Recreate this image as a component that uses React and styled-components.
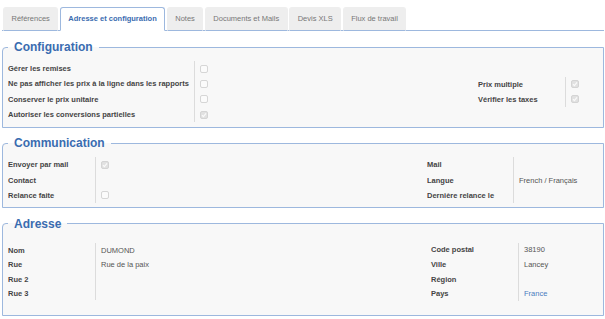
import React from 'react'
import styled, { createGlobalStyle } from 'styled-components'

const GlobalStyle = createGlobalStyle`
    html, body {
        margin: 0;
        padding: 0;
        background: #fff;
    }
    body {
        font-family: "Liberation Sans", Arial, sans-serif;
    }
`

const Page = styled.div`
    width: 602px;
    padding: 7px 1px 0 2px;
`

const TabBar = styled.div`
    display: flex;
    padding-left: 1px;
    border-bottom: 1px solid #9db8de;
`

const Tab = styled.div`
    box-sizing: border-box;
    height: 24px;
    margin: 0 1.5px -1px 0;
    padding: 0 7.5px;
    border: 1px solid ${p => (p.$active ? '#9db8de' : '#eeeeee')};
    border-bottom-color: ${p => (p.$active ? '#ffffff' : '#9db8de')};
    border-radius: 3px 3px 0 0;
    background: ${p => (p.$active ? '#ffffff' : '#eeeeee')};
    color: ${p => (p.$active ? '#3a6cb0' : '#777777')};
    font-size: 7.5px;
    font-weight: ${p => (p.$active ? 'bold' : 'normal')};
    line-height: 21px;
    white-space: nowrap;
`

const Section = styled.fieldset`
    margin: ${p => p.$gap}px 0 0;
    padding: ${p => p.$top}px 0 ${p => p.$bottom}px 5px;
    border: 1px solid #9db8de;
    border-radius: 4px 0 0 0;
    background: #f8f8f8;
    min-width: 0;
`

const Legend = styled.legend`
    margin: 0;
    padding: 0 6px;
    color: #3a6cb0;
    font-size: 12px;
    font-weight: bold;
    line-height: 16px;
`

const Body = styled.div`
    display: flex;
`

const Group = styled.div`
    display: flex;
    flex-direction: column;
    align-self: center;
    ${p => (p.$width ? `width: ${p.$width}px; flex: none;` : 'flex: 1;')}
`

const Row = styled.div`
    display: grid;
    grid-template-columns: ${p => p.$labelW}px 1fr;
    height: ${p => p.$h}px;
`

const Label = styled.div`
    display: flex;
    align-items: center;
    border-right: 1px solid #dcdcdc;
    color: #444;
    font-size: 7.5px;
    font-weight: bold;
    white-space: nowrap;
`

const Value = styled.div`
    display: flex;
    align-items: center;
    padding-left: 5px;
    color: #555;
    font-size: 7.5px;
    white-space: nowrap;
`

const Link = styled.span`
    color: #4a7cc0;
`

const Box = styled.span`
    box-sizing: border-box;
    display: inline-flex;
    align-items: center;
    justify-content: center;
    width: 8px;
    height: 8px;
    border: 1px solid ${p => (p.$checked ? '#d4d4d4' : '#d6d6d6')};
    border-radius: 2px;
    background: ${p => (p.$checked ? '#e1e1e1' : '#fbfbfb')};
`

const Checkbox = ({ checked }) => (
    <Box $checked={checked}>
        {checked && (
            <svg width="6" height="6" viewBox="0 0 6 6">
                <path d="M1 3.2 L2.4 4.6 L5 1.4" fill="none" stroke="#fafafa" strokeWidth="1.2" />
            </svg>
        )}
    </Box>
)

const tabs = ['Références', 'Adresse et configuration', 'Notes', 'Documents et Mails', 'Devis XLS', 'Flux de travail']

const sections = [
    {
        title: 'Configuration', gap: 8, top: 6, bottom: 5,
        left: {
            width: 470, labelW: 187,
            rows: [
                { label: 'Gérer les remises', check: false, h: 15.3 },
                { label: 'Ne pas afficher les prix à la ligne dans les rapports', check: false, h: 15.3 },
                { label: 'Conserver le prix unitaire', check: false, h: 15.3 },
                { label: 'Autoriser les conversions partielles', check: true, h: 15.3 },
            ],
        },
        right: {
            labelW: 88,
            rows: [
                { label: 'Prix multiple', check: true, h: 15 },
                { label: 'Vérifier les taxes', check: true, h: 15 },
            ],
        },
    },
    {
        title: 'Communication', gap: 7, top: 6, bottom: 4,
        left: {
            width: 419, labelW: 88,
            rows: [
                { label: 'Envoyer par mail', check: true, h: 15.3 },
                { label: 'Contact', h: 15.3 },
                { label: 'Relance faite', check: false, h: 15.3 },
            ],
        },
        right: {
            labelW: 87,
            rows: [
                { label: 'Mail', h: 15.3 },
                { label: 'Langue', text: 'French / Français', h: 15.3 },
                { label: 'Dernière relance le', h: 15.3 },
            ],
        },
    },
    {
        title: 'Adresse', gap: 7.5, top: 11, bottom: 14,
        left: {
            width: 423, labelW: 88,
            rows: [
                { label: 'Nom', text: 'DUMOND', h: 13.5 },
                { label: 'Rue', text: 'Rue de la paix', h: 15.5 },
                { label: 'Rue 2', h: 15 },
                { label: 'Rue 3', h: 12.5 },
            ],
        },
        right: {
            labelW: 88,
            rows: [
                { label: 'Code postal', text: '38190', h: 14 },
                { label: 'Ville', text: 'Lancey', h: 15.5 },
                { label: 'Région', h: 15 },
                { label: 'Pays', link: 'France', h: 13.5 },
            ],
        },
    },
]

const renderValue = row => {
    if (row.check !== undefined) return <Checkbox checked={row.check} />
    if (row.link) return <Link>{row.link}</Link>
    return row.text || ''
}

const FieldGroup = ({ group, width }) => (
    <Group $width={width}>
        {group.rows.map(row => (
            <Row key={row.label} $labelW={group.labelW} $h={row.h}>
                <Label>{row.label}</Label>
                <Value>{renderValue(row)}</Value>
            </Row>
        ))}
    </Group>
)

const App = () => (
    <Page>
        <GlobalStyle />
        <TabBar>
            {tabs.map(t => (
                <Tab key={t} $active={t === 'Adresse et configuration'}>{t}</Tab>
            ))}
        </TabBar>

        {sections.map(s => (
            <Section key={s.title} $gap={s.gap} $top={s.top} $bottom={s.bottom}>
                <Legend>{s.title}</Legend>
                <Body>
                    <FieldGroup group={s.left} width={s.left.width} />
                    <FieldGroup group={s.right} />
                </Body>
            </Section>
        ))}
    </Page>
)

export default App
